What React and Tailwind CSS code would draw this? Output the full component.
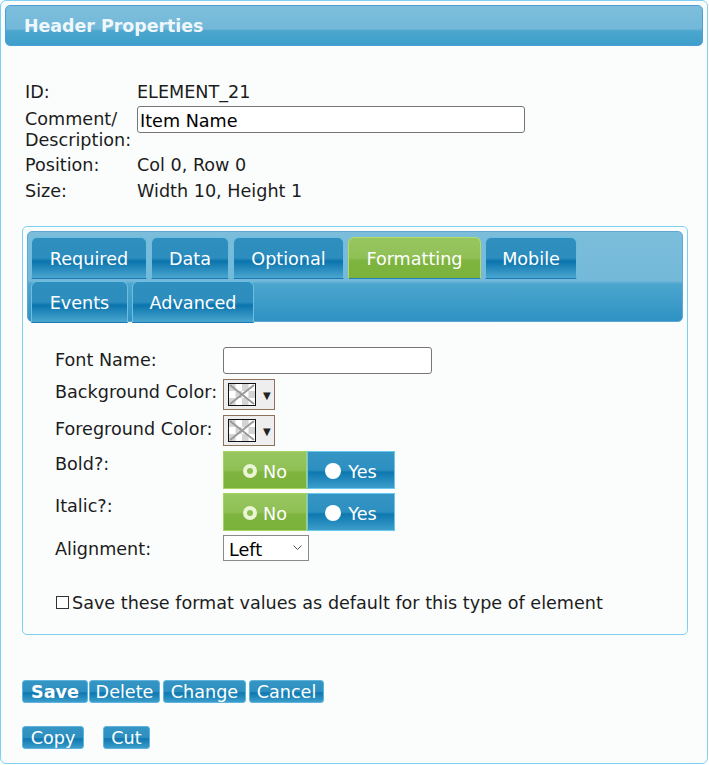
import React from 'react';

const blueBtn =
  'bg-[linear-gradient(to_bottom,#3596c4_0%,#2d8fc0_50%,#0e78b0_56%,#3b9dca_100%)]';
const greenBg =
  'bg-[linear-gradient(to_bottom,#98c661_0%,#8fc055_50%,#7eb43f_56%,#7ab33c_100%)]';

function Tab({ label, width, active }) {
  return (
    <div
      className={`h-[42px] rounded-t-[6px] border flex items-center justify-center pt-[3px] text-white ${width} ${
        active
          ? `${greenBg} border-[#b4da6c] border-b-[#2a7fb6]`
          : `bg-[linear-gradient(to_bottom,#2f90bf_0%,#2c8dbe_50%,#0b74ad_58%,#4aa6cf_100%)] border-[#6cbde0] border-b-[#1a78b4]`
      }`}
    >
      {label}
    </div>
  );
}

function Swatch() {
  return (
    <div className="w-[52px] h-[31px] border border-[#8d7259] bg-[#eeeeee] flex items-center pl-[4px] gap-[7px]">
      <svg width="28" height="23" viewBox="0 0 28 23">
        <rect x="0.5" y="0.5" width="27" height="22" fill="#ffffff" stroke="#111" />
        <rect x="1" y="1" width="6.5" height="7" fill="#d4d4d4" />
        <rect x="14" y="1" width="6.5" height="7" fill="#d4d4d4" />
        <rect x="7.5" y="8" width="6.5" height="7" fill="#d4d4d4" />
        <rect x="20.5" y="8" width="6.5" height="7" fill="#d4d4d4" />
        <rect x="1" y="15" width="6.5" height="7" fill="#d4d4d4" />
        <rect x="14" y="15" width="6.5" height="7" fill="#d4d4d4" />
        <path d="M2 2 L26 21 M26 2 L2 21" stroke="#9a9a9a" strokeWidth="2" />
      </svg>
      <span className="text-[10px] text-[#222] pt-[2px]">▼</span>
    </div>
  );
}

function Toggle() {
  return (
    <div className="flex h-[38px]">
      <div className={`w-[84px] ${greenBg} border border-[#a9d35c] flex items-center justify-center gap-[6px] pt-[3px] text-white`}>
        <span className="w-[14px] h-[14px] -mt-[2px] rounded-full bg-[#e9f5d6] flex items-center justify-center">
          <span className="w-[6px] h-[6px] rounded-full bg-[#8bbf4d]" />
        </span>
        No
      </div>
      <div className={`w-[88px] ${blueBtn} border border-[#6ac8f0] flex items-center justify-center gap-[7px] pt-[3px] text-white`}>
        <span className="w-[16px] h-[16px] -mt-[2px] rounded-full bg-white" />
        Yes
      </div>
    </div>
  );
}

function Btn({ children, w, bold }) {
  return (
    <button
      className={`h-[23px] ${w} rounded-[3px] border border-[#5fb3dc] ${blueBtn} text-white leading-none flex items-center justify-center pt-[3px] ${
        bold ? 'font-bold' : ''
      }`}
    >
      {children}
    </button>
  );
}

export default function App() {
  return (
    <div className="w-[709px] h-[765px] bg-white font-['DejaVu_Sans',sans-serif] text-[17.6px] text-[#1c1c1c]">
      <div className="w-[708px] h-[764px] border border-[#7dd0ef] rounded-[6px] bg-[#fbfdfd] px-[4px] pt-[4px]">
        <div className="h-[41px] rounded-[5px] border border-[#4c9fd6] bg-[linear-gradient(to_bottom,#7dbedc_0%,#73b8d9_58%,#4ba6cd_64%,#3e9fcb_100%)] flex items-center pl-[18px] pt-[2px] font-bold text-[17.4px] text-[#eef7fb]">
          Header Properties
        </div>

        <div className="ml-[20px] mt-[35px] flex flex-col gap-[3px] leading-[22px]">
          <div className="flex h-[22px]">
            <div className="w-[112px]">ID:</div>
            <div>ELEMENT_21</div>
          </div>
          <div className="flex">
            <div className="w-[112px] pt-[3px] leading-[21px]">
              Comment/
              <br />
              Description:
            </div>
            <input
              defaultValue="Item Name"
              className="w-[388px] h-[27px] border border-[#767676] rounded-[3px] bg-white px-[2px] pt-[2px] text-[17.6px] text-black outline-none"
            />
          </div>
          <div className="flex h-[22px]">
            <div className="w-[112px]">Position:</div>
            <div>Col 0, Row 0</div>
          </div>
          <div className="flex h-[22px] pt-[1px]">
            <div className="w-[112px]">Size:</div>
            <div>Width 10, Height 1</div>
          </div>
        </div>

        <div className="ml-[17px] mt-[25px] w-[666px] h-[409px] border border-[#7dd0ef] rounded-[5px] p-[4px]">
          <div className="h-[91px] rounded-[5px] border border-[#5fa7d2] bg-[linear-gradient(to_bottom,#7bbddb_0%,#74b9d9_55%,#4ca6cd_58%,#2e92c4_100%)] px-[3px] pt-[5px] flex flex-col gap-[2px]">
            <div className="flex gap-[4px]">
              <Tab label="Required" width="w-[116px]" />
              <Tab label="Data" width="w-[78px]" />
              <Tab label="Optional" width="w-[111px]" />
              <Tab label="Formatting" width="w-[133px]" active />
              <Tab label="Mobile" width="w-[92px]" />
            </div>
            <div className="flex gap-[4px]">
              <Tab label="Events" width="w-[97px]" />
              <Tab label="Advanced" width="w-[122px]" />
            </div>
          </div>

          <div className="pl-[28px] pt-[25px] flex flex-col leading-[22px]">
            <div className="flex">
              <div className="w-[168px] pt-[2px]">Font Name:</div>
              <input className="w-[209px] h-[27px] border border-[#767676] rounded-[3px] bg-white outline-none" />
            </div>
            <div className="flex mt-[5px]">
              <div className="w-[168px] pt-[2px]">Background Color:</div>
              <Swatch />
            </div>
            <div className="flex mt-[5px]">
              <div className="w-[168px] pt-[3px]">Foreground Color:</div>
              <Swatch />
            </div>
            <div className="flex mt-[5px]">
              <div className="w-[168px] pt-[2px]">Bold?:</div>
              <Toggle />
            </div>
            <div className="flex mt-[4px]">
              <div className="w-[168px] pt-[2px]">Italic?:</div>
              <Toggle />
            </div>
            <div className="flex mt-[4px]">
              <div className="w-[168px] pt-[3px]">Alignment:</div>
              <div className="w-[86px] h-[26px] border border-[#8a8a8a] bg-white flex items-center justify-between pl-[5px] pr-[6px] pt-[3px] text-black">
                Left
                <svg width="9" height="6" viewBox="0 0 9 6" className="-mt-[3px]">
                  <path d="M0.5 0.5 L4.5 4.5 L8.5 0.5" fill="none" stroke="#555" strokeWidth="1" />
                </svg>
              </div>
            </div>
            <div className="flex items-center mt-[29px] ml-[1px]">
              <span className="w-[13px] h-[13px] border border-[#333] bg-white mr-[3px]" />
              <span className="pt-[2px]">Save these format values as default for this type of element</span>
            </div>
          </div>
        </div>

        <div className="ml-[17px] mt-[45px] flex gap-[1px] items-center">
          <Btn w="w-[66px]" bold>Save</Btn>
          <Btn w="w-[71px]">Delete</Btn>
          <div className="w-[1px]" />
          <Btn w="w-[83px]">Change</Btn>
          <div className="w-[1px]" />
          <Btn w="w-[75px]">Cancel</Btn>
        </div>
        <div className="ml-[17px] mt-[23px] flex gap-[19px]">
          <Btn w="w-[62px]">Copy</Btn>
          <Btn w="w-[47px]">Cut</Btn>
        </div>
      </div>
    </div>
  );
}
